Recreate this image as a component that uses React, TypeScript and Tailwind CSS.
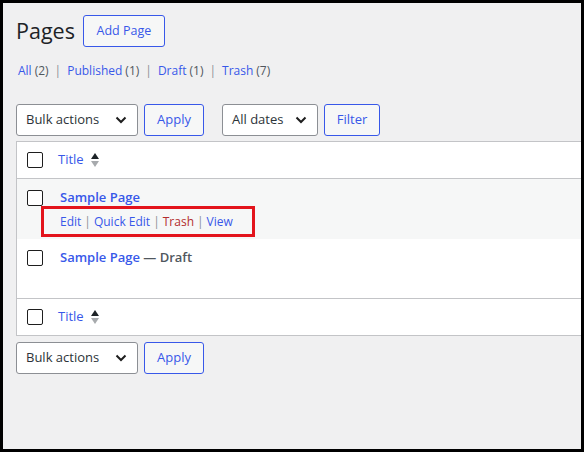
import React from "react";

const BLUE = "text-[#3858e9]";

function Checkbox() {
  return <span className="block w-[16px] h-[16px] border-[1.5px] border-[#1e1e1e] rounded-[2px] bg-white shrink-0" />;
}

function Chevron() {
  return (
    <svg width="12" height="8" viewBox="0 0 12 8" className="shrink-0">
      <path d="M1.5 1.5 L6 6 L10.5 1.5" fill="none" stroke="#1e1e1e" strokeWidth="2" />
    </svg>
  );
}

function SortIcon() {
  return (
    <svg width="10" height="16" viewBox="0 0 10 16" className="shrink-0">
      <path d="M1 7 L5 1 L9 7 Z" fill="#1d2327" />
      <path d="M1 9 L9 9 L5 15 Z" fill="#a7aaad" />
    </svg>
  );
}

function Select({ label, w }: { label: string; w: string }) {
  return (
    <div className={`${w} h-[32px] bg-white border border-[#8c8f94] rounded-[3px] flex items-center pl-[9px] text-[13px] text-[#2c3338]`}>
      <span>{label}</span>
      <span className="ml-auto mr-[10px]">
        <Chevron />
      </span>
    </div>
  );
}

function Btn({ label, w }: { label: string; w: string }) {
  return (
    <div className={`${w} h-[32px] bg-[#f6f7f7] border border-[#3858e9] rounded-[3px] flex items-center justify-center text-[13px] ${BLUE}`}>
      {label}
    </div>
  );
}

function Sep() {
  return <span className="mx-[6px] text-[#8c8f94]">|</span>;
}

function ASep() {
  return <span className="mx-[3px] text-[#8c8f94]">|</span>;
}

export default function App() {
  return (
    <div className="w-[584px] h-[452px] border-[3px] border-black bg-[#f0f0f1] overflow-hidden font-['Open_Sans',sans-serif] text-[#3c434a]">
      <div className="pl-[13px] pt-[12px]">
        <div className="flex items-center gap-[8px]">
          <h1 className="text-[21.5px] leading-[30px] text-[#1d2327] font-normal">Pages</h1>
          <div className={`w-[82px] h-[32px] border border-[#3858e9] rounded-[3px] bg-[#f6f7f7] flex items-center justify-center text-[12.5px] font-medium ${BLUE}`}>
            Add Page
          </div>
        </div>

        <div className="mt-[14px] text-[12px] leading-[20px] pl-[2px] flex items-center text-[#50575e]">
          <span className={BLUE}>All</span>
          <span className="ml-[3px]">(2)</span>
          <Sep />
          <span className={BLUE}>Published</span>
          <span className="ml-[3px]">(1)</span>
          <Sep />
          <span className={BLUE}>Draft</span>
          <span className="ml-[3px]">(1)</span>
          <Sep />
          <span className={BLUE}>Trash</span>
          <span className="ml-[3px]">(7)</span>
        </div>

        <div className="mt-[23px] flex items-center">
          <Select label="Bulk actions" w="w-[122px]" />
          <div className="ml-[6px]">
            <Btn label="Apply" w="w-[60px]" />
          </div>
          <div className="ml-[18px]">
            <Select label="All dates" w="w-[96px]" />
          </div>
          <div className="ml-[6px]">
            <Btn label="Filter" w="w-[56px]" />
          </div>
        </div>

        <div className="mt-[5px] bg-white border-l border-t border-b border-[#c3c4c7]">
          <div className="h-[37px] border-b border-[#c3c4c7] flex items-center pl-[10px]">
            <Checkbox />
            <span className={`ml-[15px] text-[13px] ${BLUE}`}>Title</span>
            <span className="ml-[6px]">
              <SortIcon />
            </span>
          </div>

          <div className="h-[60px] bg-[#f6f7f7] flex pl-[10px]">
            <div className="pt-[11px]">
              <Checkbox />
            </div>
            <div className="ml-[17px] pt-[8px]">
              <div className={`text-[13px] leading-[20px] font-semibold ${BLUE}`}>Sample Page</div>
              <div className="-ml-[19px] -mt-[1px] w-[214px] h-[31px] border-[3px] border-[#e3141c] pl-[16px] flex items-center text-[12px]">
                <span className={BLUE}>Edit</span>
                <ASep />
                <span className={BLUE}>Quick Edit</span>
                <ASep />
                <span className="text-[#b32d2e]">Trash</span>
                <ASep />
                <span className={BLUE}>View</span>
              </div>
            </div>
          </div>

          <div className="h-[60px] border-b border-[#c3c4c7] flex pl-[10px]">
            <div className="pt-[11px]">
              <Checkbox />
            </div>
            <div className="ml-[17px] pt-[8px] text-[13px] leading-[20px] font-semibold">
              <span className={BLUE}>Sample Page</span>
              <span className="text-[#50575e]"> — Draft</span>
            </div>
          </div>

          <div className="h-[36px] flex items-center pl-[10px]">
            <Checkbox />
            <span className={`ml-[15px] text-[13px] ${BLUE}`}>Title</span>
            <span className="ml-[6px]">
              <SortIcon />
            </span>
          </div>
        </div>

        <div className="mt-[6px] flex items-center">
          <Select label="Bulk actions" w="w-[122px]" />
          <div className="ml-[6px]">
            <Btn label="Apply" w="w-[60px]" />
          </div>
        </div>
      </div>
    </div>
  );
}
